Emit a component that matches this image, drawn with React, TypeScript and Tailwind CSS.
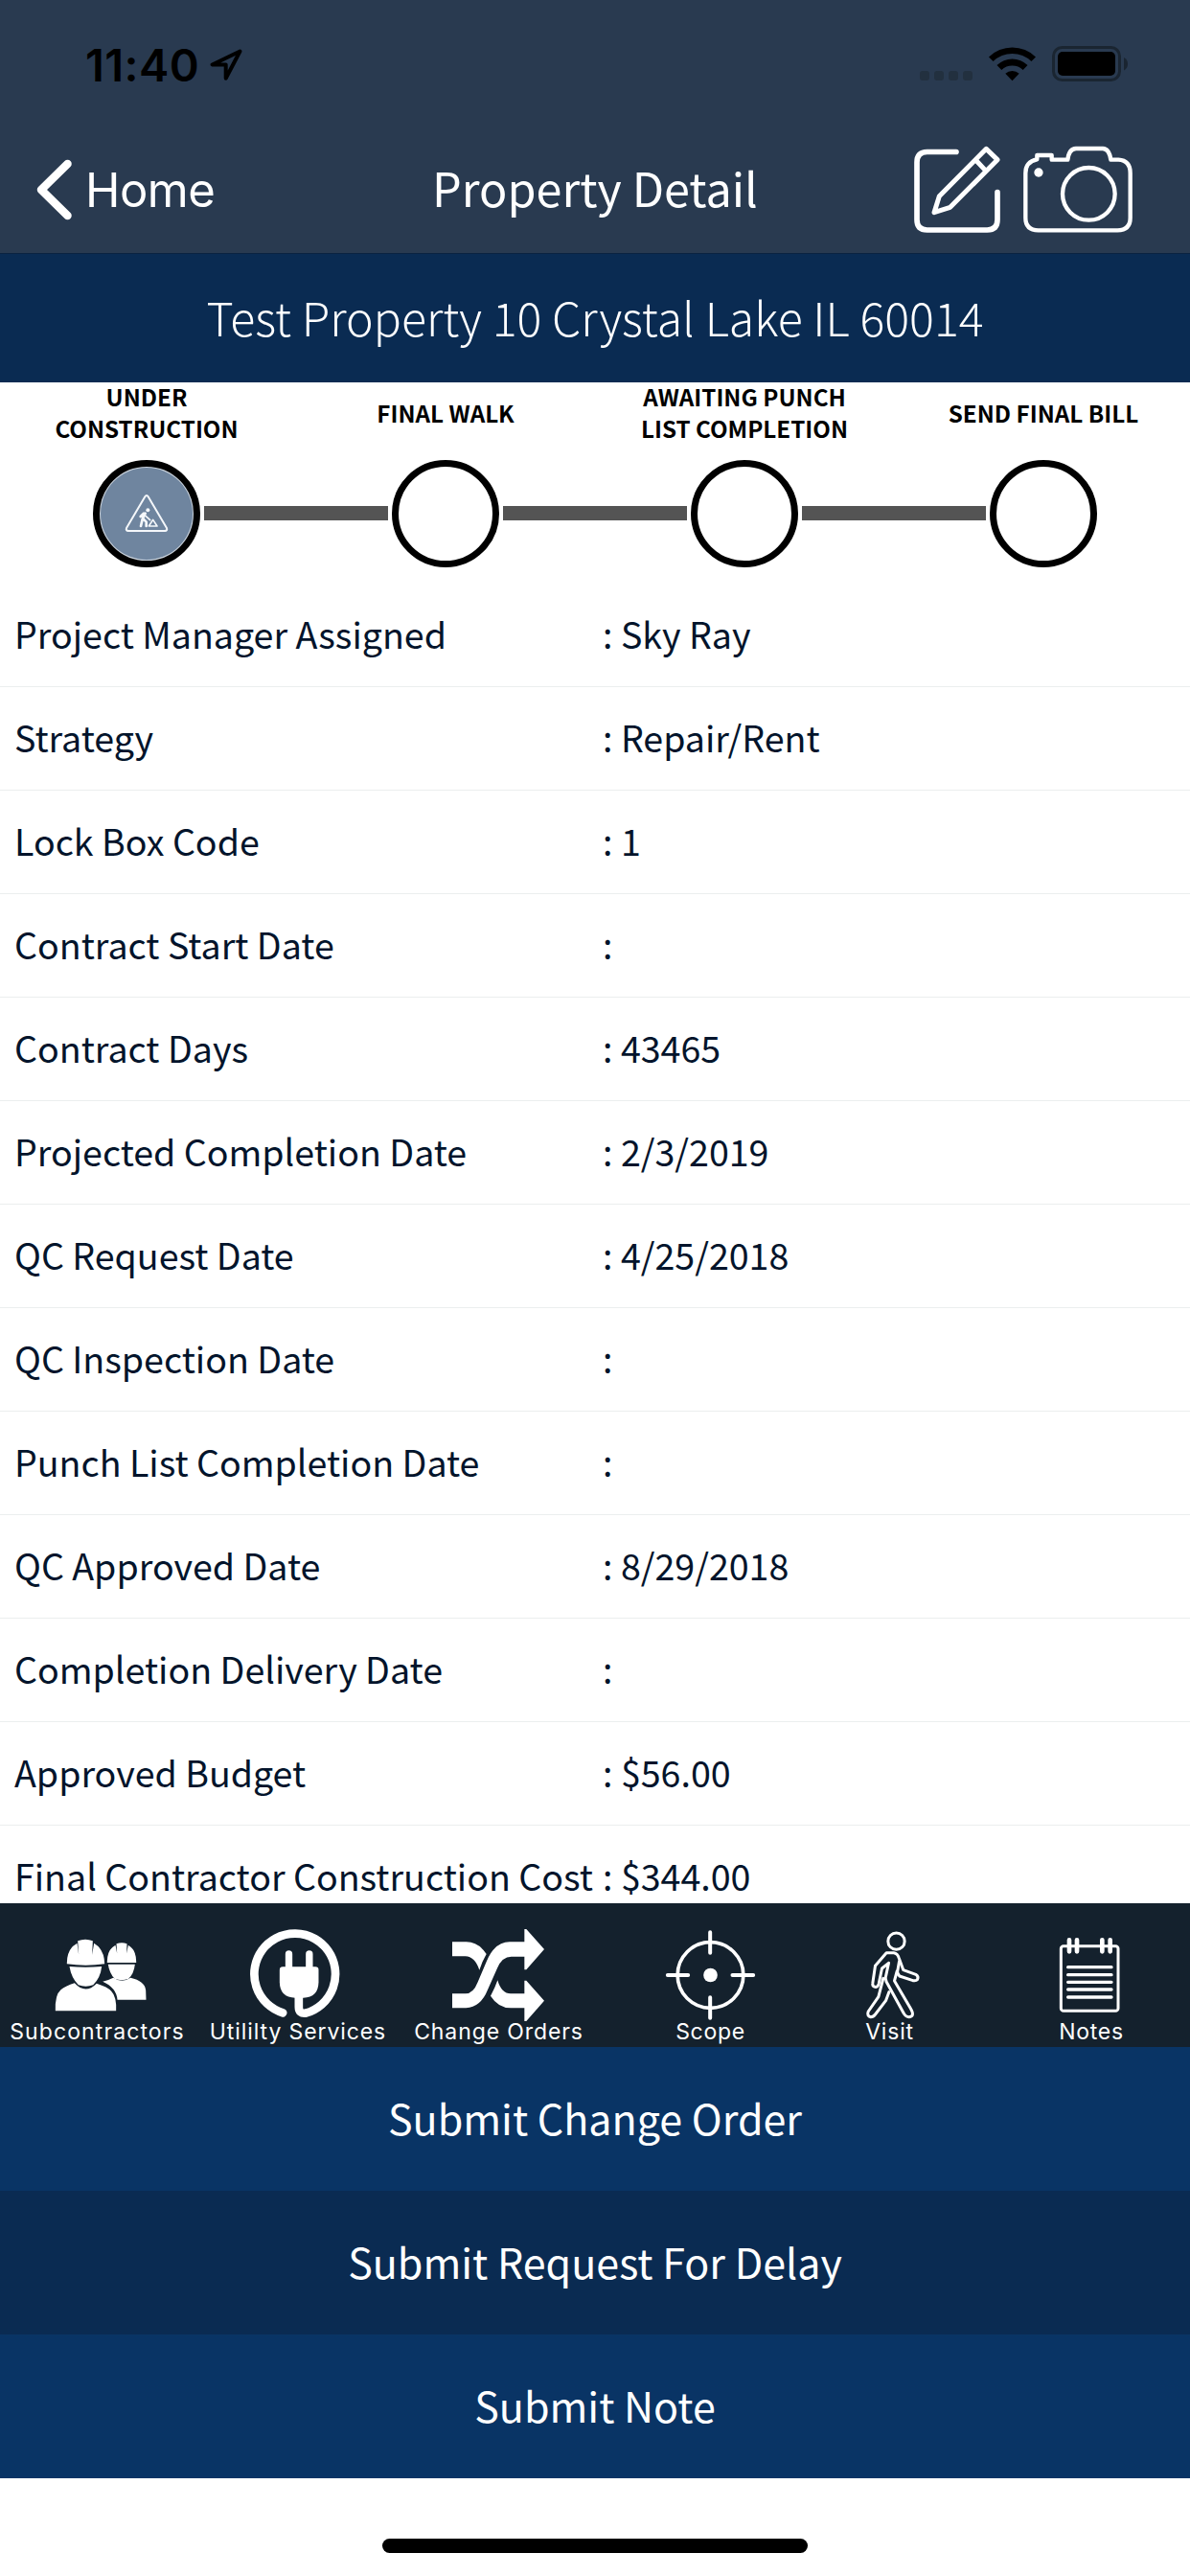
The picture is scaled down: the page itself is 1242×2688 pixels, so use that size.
import type { ReactNode } from 'react';

const details = [
  { label: 'Project Manager Assigned', value: 'Sky Ray' },
  { label: 'Strategy', value: 'Repair/Rent' },
  { label: 'Lock Box Code', value: '1' },
  { label: 'Contract Start Date', value: '' },
  { label: 'Contract Days', value: '43465' },
  { label: 'Projected Completion Date', value: '2/3/2019' },
  { label: 'QC Request Date', value: '4/25/2018' },
  { label: 'QC Inspection Date', value: '' },
  { label: 'Punch List Completion Date', value: '' },
  { label: 'QC Approved Date', value: '8/29/2018' },
  { label: 'Completion Delivery Date', value: '' },
  { label: 'Approved Budget', value: '$56.00' },
  { label: 'Final Contractor Construction Cost', value: '$344.00' },
];

const steps = ['UNDER\nCONSTRUCTION', 'FINAL WALK', 'AWAITING PUNCH\nLIST COMPLETION', 'SEND FINAL BILL'];

function StatusBar() {
  return (
    <div className="flex h-[132px] items-start justify-between pl-[89px] pr-[64px] pt-[44px] text-black">
      <div className="flex items-center">
        <span className="font-['Inter',sans-serif] text-[47px] font-semibold leading-[48px] tracking-[0.4px]">11:40</span>
        <svg className="ml-[10px] h-9 w-9" viewBox="0 0 36 36" fill="none" stroke="currentColor" strokeWidth="4" strokeLinejoin="round">
          <path d="M32.5 3.5 3.5 17.5h14.2v14.3z" />
        </svg>
      </div>
      <svg className="h-[45px] w-[222px]" viewBox="956 45 222 45">
        <g fill="#22303f">
          <rect x="960" y="75" width="10" height="10" rx="3" />
          <rect x="975" y="75" width="10" height="10" rx="3" />
          <rect x="990" y="75" width="10" height="10" rx="3" />
          <rect x="1005" y="75" width="10" height="10" rx="3" />
        </g>
        <path d="M1032 60.5a35 35 0 0 1 49 0l-4.6 4.6a28.5 28.5 0 0 0-39.8 0z" />
        <path d="M1040.5 69a23 23 0 0 1 32 0l-4.8 5a16.5 16.5 0 0 0-22.4 0z" />
        <path d="M1049.3 77.8a10.5 10.5 0 0 1 14.4 0l-7.2 7.4z" />
        <rect x="1099.500" y="50.500" width="69" height="34" rx="9" fill="none" stroke="#1a2531" strokeWidth="3" />
        <rect x="1104" y="55" width="60" height="25" rx="5" />
        <path d="M1173 61v13.500q4-2 4-6.750t-4-6.750z" fill="#1a2531" />
      </svg>
    </div>
  );
}

function NavBar() {
  return (
    <div className="grid h-[132px] grid-cols-[1fr_auto_1fr] items-center px-[60px] text-white">
      <button type="button" className="-ml-[22px] flex items-center">
        <svg className="h-16 w-[38px]" viewBox="0 0 38 64" fill="none" stroke="currentColor" strokeWidth="8.500" strokeLinecap="round" strokeLinejoin="round">
          <path d="M32.500 5 5 32l27.500 27" />
        </svg>
        <span className="ml-[13px] pt-0.5 font-['Inter',sans-serif] text-[49px] leading-[60px] tracking-[-0.5px]">Home</span>
      </button>
      <h1 className="pb-[5px] text-[48.500px]">Property Detail</h1>
      <div className="flex items-center justify-end gap-6">
        <svg className="h-[92px] w-[90px]" viewBox="42 36 270 276" fill="none" stroke="currentColor" strokeWidth="17" strokeLinecap="round" strokeLinejoin="round">
          <path d="M174 55.500H83Q51 56 51 88v180q0 32 32 32h188q32 0 32-32v-86" />
          <path d="m268 46 35 34-148 149-50 16 16-51zM238 84l29 31" strokeWidth="15" />
        </svg>
        <svg className="h-[92px] w-[114px]" viewBox="384 36 342 276" fill="none" stroke="currentColor" strokeWidth="13" strokeLinejoin="round">
          <path d="M427 79V66h46v14h50q4-34 26-35h84q20 1 25 35h24q37 2 37 42v140q0 39-40 39H431q-40 0-40-39V122q0-36 36-43z" />
          <circle cx="589" cy="187" r="82" />
          <circle cx="432" cy="120" r="14" fill="currentColor" stroke="none" />
        </svg>
      </div>
    </div>
  );
}

function ConstructionIcon() {
  return (
    <svg className="h-[46px] w-[46px]" viewBox="0 0 138 138" fill="none" stroke="#f4f7fa" strokeLinecap="round" strokeLinejoin="round">
      <path d="M64 16q5-8 10 0l58 98q3 8-6 9H12q-9-1-6-9z" strokeWidth="6" />
      <circle cx="73" cy="58" r="6" fill="#f4f7fa" stroke="none" />
      <path d="M65 68 56 86M60 68 50 78M56 86l-5 22M59 86l9 9v13" strokeWidth="8" />
      <path d="m66 76 14 13M76 108l13-20 13 20z" strokeWidth="5" />
    </svg>
  );
}

function Progress() {
  return (
    <section className="h-[210px] shrink-0 text-black">
      <div className="-ml-[3px] grid h-[62px] w-[1248px] grid-cols-4 content-center items-center">
        {steps.map((step) => (
          <div key={step} className="whitespace-pre text-center text-[24.200px] font-bold leading-[33px]">
            {step}
          </div>
        ))}
      </div>
      <div className="mt-[18.500px] flex items-center gap-1 pl-[97px]">
        {steps.map((step, i) => (
          <div key={step} className="flex items-center gap-1">
            {i > 0 && <div className="h-[15px] w-[192px] bg-[#545454]" />}
            {i === 0 ? (
              <div className="flex size-[112px] items-center justify-center rounded-full border-[7px] border-black bg-[#c9d2dc] p-px">
                <div className="flex size-full items-center justify-center rounded-full bg-[#6f859f]">
                  <ConstructionIcon />
                </div>
              </div>
            ) : (
              <div className="size-[112px] rounded-full border-[7.500px] border-black bg-white" />
            )}
          </div>
        ))}
      </div>
    </section>
  );
}

function ToolIcon({ x, children }: { x: number; children: ReactNode }) {
  return (
    <svg className="size-[110px]" viewBox={`${x} 0 330 330`} fill="none" stroke="white" strokeLinecap="round" strokeLinejoin="round">
      {children}
    </svg>
  );
}

function Tool({ label, className, children }: { label: string; className: string; children: ReactNode }) {
  return (
    <button type="button" className={`flex flex-col items-center pt-[19px] ${className}`}>
      {children}
      <span className="-mt-[7px] whitespace-nowrap font-['Inter',sans-serif] text-[23px] leading-6">{label}</span>
    </button>
  );
}

function Toolbar() {
  return (
    <nav className="flex h-[150px] shrink-0 items-start bg-[#14212d] text-white">
      <Tool label="Subcontractors" className="w-[203px] tracking-[1.100px]">
        <ToolIcon x={-10.5}>
          <g fill="white" stroke="none">
            <path d="M184 126q0-38 26-52l5 26-2-30q17-6 33 0l-1 30 5-26q25 14 25 52v3h-91z" />
            <path d="M187 134h84q-3 30-21 46-20 7-42 0-17-18-21-46z" />
            <path d="M170 188q18-4 33-12 28 18 54 0 45 10 48 39l1 30h-90q-3-38-46-57z" />
            <path d="M58 133q-1-47 32-65l5 36-3-43q24-9 47 0l-2 43 6-36q32 19 33 65-59 8-118 0z" />
            <path d="M66 141q49 5 101 0-4 36-27 58-23 8-46 0-22-22-28-58z" />
            <path d="M22 280q-2-50 17-66 15-12 43-21 34 37 69 1 35 11 46 24 17 17 15 62z" />
          </g>
        </ToolIcon>
      </Tool>
      <Tool label="Utililty Services" className="ml-2 w-[200px] tracking-[0.900px]">
        <ToolIcon x={616.5}>
          <path d="M734 286A127 127 0 1 1 806 287Q784 290 784 268V230" strokeWidth="26" />
          <path d="M753 102v50M817 102v50" strokeWidth="22" />
          <path d="M734 142h102q10 0 10 10v38q-1 49-48 49h-25q-48 0-49-49v-38q0-10 10-10z" fill="white" stroke="none" />
        </ToolIcon>
      </Tool>
      <Tool label="Change Orders" className="w-[219px] tracking-[0.900px]">
        <ToolIcon x={1245}>
          <g fill="white" stroke="none">
            <path d="M1263 226h42q24 0 38-36l28-66q24-59 72-60h46V24h6l56 63-56 64h-6v-41h-41q-29 0-44 36l-30 68q-22 55-68 57h-43z" />
            <path d="M1263 64h44q38 0 63 38-14 24-22 50-14-42-44-43h-41zM1405 184q12 42 41 42h43v-41h6l56 63-56 64h-6v-41h-42q-40 0-64-38 14-25 22-49z" />
          </g>
        </ToolIcon>
      </Tool>
      <Tool label="Scope" className="w-[223px] tracking-[0.700px]">
        <ToolIcon x={19.5}>
          <circle cx="183" cy="168" r="103" strokeWidth="11" />
          <path d="M182 34v64M182 238v64M49 168h64M252 168h65" strokeWidth="12" />
          <circle cx="183" cy="168" r="22" fill="white" stroke="none" />
        </ToolIcon>
      </Tool>
      <Tool label="Visit" className="w-[151px] tracking-[0.800px]">
        <ToolIcon x={580.5}>
          <g strokeWidth="9">
            <circle cx="765" cy="62" r="26" />
            <path d="M734 98h23q12 2 16 16l14 38 39 14q10 6 5 16-4 5-14 3l-42-14q-4-5-8-15l-8 30 51 87q14 24-5 26-11 0-17-12l-54-98-3-12 10-47-21 17-10 48q-3 12-12 10-9-2-7-12l8-54z" />
            <path d="m724 178-15 58-32 46q-5 14 8 17 8 0 14-8l33-43 10-27M774 125l-6 35" />
          </g>
        </ToolIcon>
      </Tool>
      <Tool label="Notes" className="ml-8 w-[206px] tracking-[0.700px]">
        <ToolIcon x={1212}>
          <rect x="1282" y="77" width="179" height="203" rx="8" strokeWidth="9" />
          <path d="M1308 58v36M1332 58v36M1411 58v36M1436 58v36" strokeWidth="14" />
          <path d="M1304 143h136M1304 167h136M1304 190h136M1304 213h136M1304 237h136" strokeWidth="10" />
        </ToolIcon>
      </Tool>
    </nav>
  );
}

export default function App() {
  return (
    <div className="flex h-[2688px] w-[1242px] flex-col overflow-hidden bg-white font-['Noto_Sans_CJK_SC',sans-serif]">
      <header className="shrink-0 border-b border-[#0b2240] bg-[#293a50]">
        <StatusBar />
        <NavBar />
      </header>
      <div className="flex h-[134px] shrink-0 items-center justify-center bg-[#0a2b52] pb-1 text-[48.300px] font-light text-white">
        Test Property 10 Crystal Lake IL 60014
      </div>
      <Progress />
      <main className="min-h-0 flex-1 overflow-hidden text-[37.600px] text-[#03142b]">
        {details.map((row) => (
          <div key={row.label} className="flex h-[108px] items-center whitespace-nowrap border-b border-[#ebeeee] pb-[3px] pl-[15px]">
            <div className="w-[614px]">{row.label}</div>
            <div>: {row.value}</div>
          </div>
        ))}
      </main>
      <Toolbar />
      <div className="flex shrink-0 flex-col text-[43px] text-white">
        <button type="button" className="h-[150px] bg-[#093465] pb-[3px]">Submit Change Order</button>
        <button type="button" className="h-[150px] bg-[#0a2b52] pb-[3px]">Submit Request For Delay</button>
        <button type="button" className="h-[150px] bg-[#093465] pb-[3px]">Submit Note</button>
      </div>
      <div className="flex h-[102px] shrink-0 justify-center pt-[63px]">
        <div className="h-[15px] w-[444px] rounded-full bg-black" />
      </div>
    </div>
  );
}
